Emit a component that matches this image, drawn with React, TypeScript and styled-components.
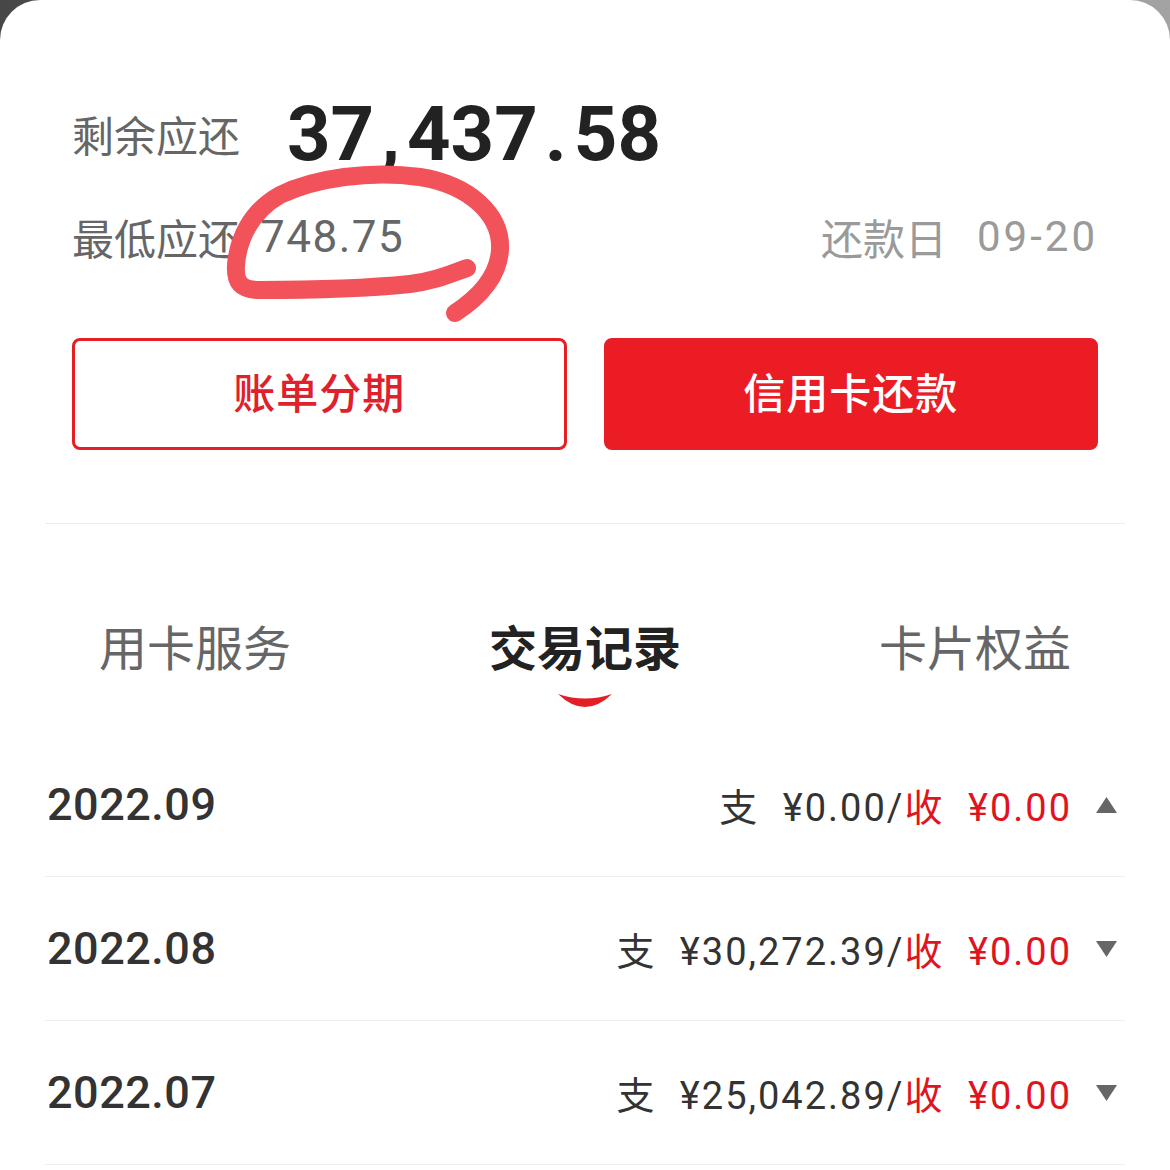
import styled, { createGlobalStyle } from "styled-components";

const GlobalStyle = createGlobalStyle`
  html, body {
    margin: 0;
    padding: 0;
  }
  body {
    background: linear-gradient(90deg, #474747 0%, #7a7a7a 50%, #a3a3a3 100%);
    font-family: Roboto, "Noto Sans CJK SC", sans-serif;
  }
`;

const RED = "#e61e25";
const LATIN = `Roboto, "Noto Sans CJK SC", sans-serif`;
const CJK = `"Noto Sans CJK SC", sans-serif`;

const Card = styled.div`
  position: relative;
  width: 1170px;
  min-height: 1170px;
  background: #fff;
  border-radius: 40px 40px 0 0;
  overflow: hidden;
  padding-top: 94px;
  box-sizing: border-box;
`;

const Summary = styled.div`
  padding: 0 72px;
`;

const BalanceRow = styled.div`
  display: flex;
  align-items: center;
  height: 80px;
`;

const Label = styled.span<{ $muted?: boolean }>`
  font-family: ${CJK};
  font-size: 42px;
  line-height: 1;
  color: ${(props) => (props.$muted ? "#9a9a9a" : "#666")};
`;

const BigAmount = styled.span`
  font-family: ${LATIN};
  font-weight: 700;
  font-size: 76px;
  line-height: 1;
  color: #222;
  margin-left: 47px;
`;

const Sep = styled.span`
  margin: 0 7px;
`;

const MinRow = styled.div`
  display: flex;
  align-items: center;
  justify-content: space-between;
  height: 60px;
  margin-top: 33px;
`;

const Group = styled.div`
  display: flex;
  align-items: center;
`;

const MinAmount = styled.span<{ $muted?: boolean }>`
  font-family: ${LATIN};
  font-size: ${(props) => (props.$muted ? "42px" : "44px")};
  line-height: 1;
  letter-spacing: ${(props) => (props.$muted ? "3px" : "1.5px")};
  color: ${(props) => (props.$muted ? "#9a9a9a" : "#666")};
  margin-left: ${(props) => (props.$muted ? "30px" : "20px")};
`;

const ButtonRow = styled.div`
  display: grid;
  grid-template-columns: 1fr 1fr;
  gap: 37px;
  margin-top: 71px;
`;

const ActionButton = styled.button<{ $solid?: boolean }>`
  height: 112px;
  box-sizing: border-box;
  border: 3px solid ${RED};
  border-radius: 8px;
  background: ${(props) => (props.$solid ? "#ec1c24" : "#fff")};
  color: ${(props) => (props.$solid ? "#fff" : "#e0202a")};
  font-family: ${CJK};
  font-size: 42px;
  font-weight: 500;
  letter-spacing: 1px;
  padding: 0 0 8px;
  cursor: pointer;
`;

const Divider = styled.div`
  height: 1px;
  background: #ececec;
  margin: 73px 45px 0;
`;

const TabBar = styled.div`
  display: grid;
  grid-template-columns: repeat(3, 1fr);
  height: 209px;
`;

const Tab = styled.div`
  display: flex;
  flex-direction: column;
  align-items: center;
  padding-top: 93px;
`;

const TabLabel = styled.span<{ $active?: boolean }>`
  font-family: ${CJK};
  font-size: 48px;
  line-height: 56px;
  font-weight: ${(props) => (props.$active ? 700 : 400)};
  color: ${(props) => (props.$active ? "#222" : "#666")};
`;

const Indicator = styled.svg`
  margin-top: 20px;
`;

const MonthList = styled.div`
  margin: 0 45px;
`;

const MonthRow = styled.div`
  display: flex;
  align-items: center;
  justify-content: space-between;
  height: 143px;
  border-bottom: 1px solid #efefef;
  padding: 0 8px 0 2px;
`;

const MonthLabel = styled.span`
  font-family: ${LATIN};
  font-weight: 500;
  font-size: 45px;
  letter-spacing: 0.5px;
  color: #333;
`;

const Totals = styled.span`
  font-family: ${LATIN};
  font-size: 38px;
  letter-spacing: 2px;
  word-spacing: 12px;
  color: #333;
  white-space: pre;
`;

const Income = styled.span`
  color: #e0141e;
`;

const Caret = styled.svg`
  margin-left: 24px;
  fill: #666;
`;

const Scribble = styled.svg`
  position: absolute;
  left: 220px;
  top: 160px;
  pointer-events: none;
`;

interface Month {
  label: string;
  spent: string;
  received: string;
  open: boolean;
}

const months: Month[] = [
  { label: "2022.09", spent: "¥0.00", received: "¥0.00", open: true },
  { label: "2022.08", spent: "¥30,272.39", received: "¥0.00", open: false },
  { label: "2022.07", spent: "¥25,042.89", received: "¥0.00", open: false },
];

const tabs = ["用卡服务", "交易记录", "卡片权益"];

function App() {
  return (
    <>
      <GlobalStyle />
      <Card>
        <Summary>
          <BalanceRow>
            <Label>剩余应还</Label>
            <BigAmount>
              37<Sep>,</Sep>437<Sep>.</Sep>58
            </BigAmount>
          </BalanceRow>
          <MinRow>
            <Group>
              <Label>最低应还</Label>
              <MinAmount>748.75</MinAmount>
            </Group>
            <Group>
              <Label $muted>还款日</Label>
              <MinAmount $muted>09-20</MinAmount>
            </Group>
          </MinRow>
          <ButtonRow>
            <ActionButton>账单分期</ActionButton>
            <ActionButton $solid>信用卡还款</ActionButton>
          </ButtonRow>
        </Summary>
        <Divider />
        <TabBar>
          {tabs.map((t, i) => (
            <Tab key={t}>
              <TabLabel $active={i === 1}>{t}</TabLabel>
              {i === 1 && (
                <Indicator width="56" height="15" viewBox="0 0 56 15">
                  <path d="M1 1 Q28 27 55 1 Q28 10 1 1 Z" fill="#e31e24" />
                </Indicator>
              )}
            </Tab>
          ))}
        </TabBar>
        <MonthList>
          {months.map((m) => (
            <MonthRow key={m.label}>
              <MonthLabel>{m.label}</MonthLabel>
              <Group>
                <Totals>
                  支 {m.spent}/<Income>收 {m.received}</Income>
                </Totals>
                <Caret width="21" height="16" viewBox="0 0 21 16">
                  {m.open ? (
                    <path d="M10.5 0 L21 16 L0 16 Z" />
                  ) : (
                    <path d="M0 0 L21 0 L10.5 16 Z" />
                  )}
                </Caret>
              </Group>
            </MonthRow>
          ))}
        </MonthList>
        {/* hand-drawn marker annotation over the minimum payment */}
        <Scribble width="300" height="170" viewBox="0 0 300 170">
          <path
            d="M235 153 C255 140 278 120 280 90 C282 55 250 25 200 17 C150 10 95 18 60 35 C30 52 18 80 16 105 C15 122 20 130 40 130 C90 130 150 128 190 124 C215 121 230 114 247 108"
            fill="none"
            stroke="#f2525a"
            strokeWidth="18"
            strokeLinecap="round"
            strokeLinejoin="round"
          />
        </Scribble>
      </Card>
    </>
  );
}

export default App;
